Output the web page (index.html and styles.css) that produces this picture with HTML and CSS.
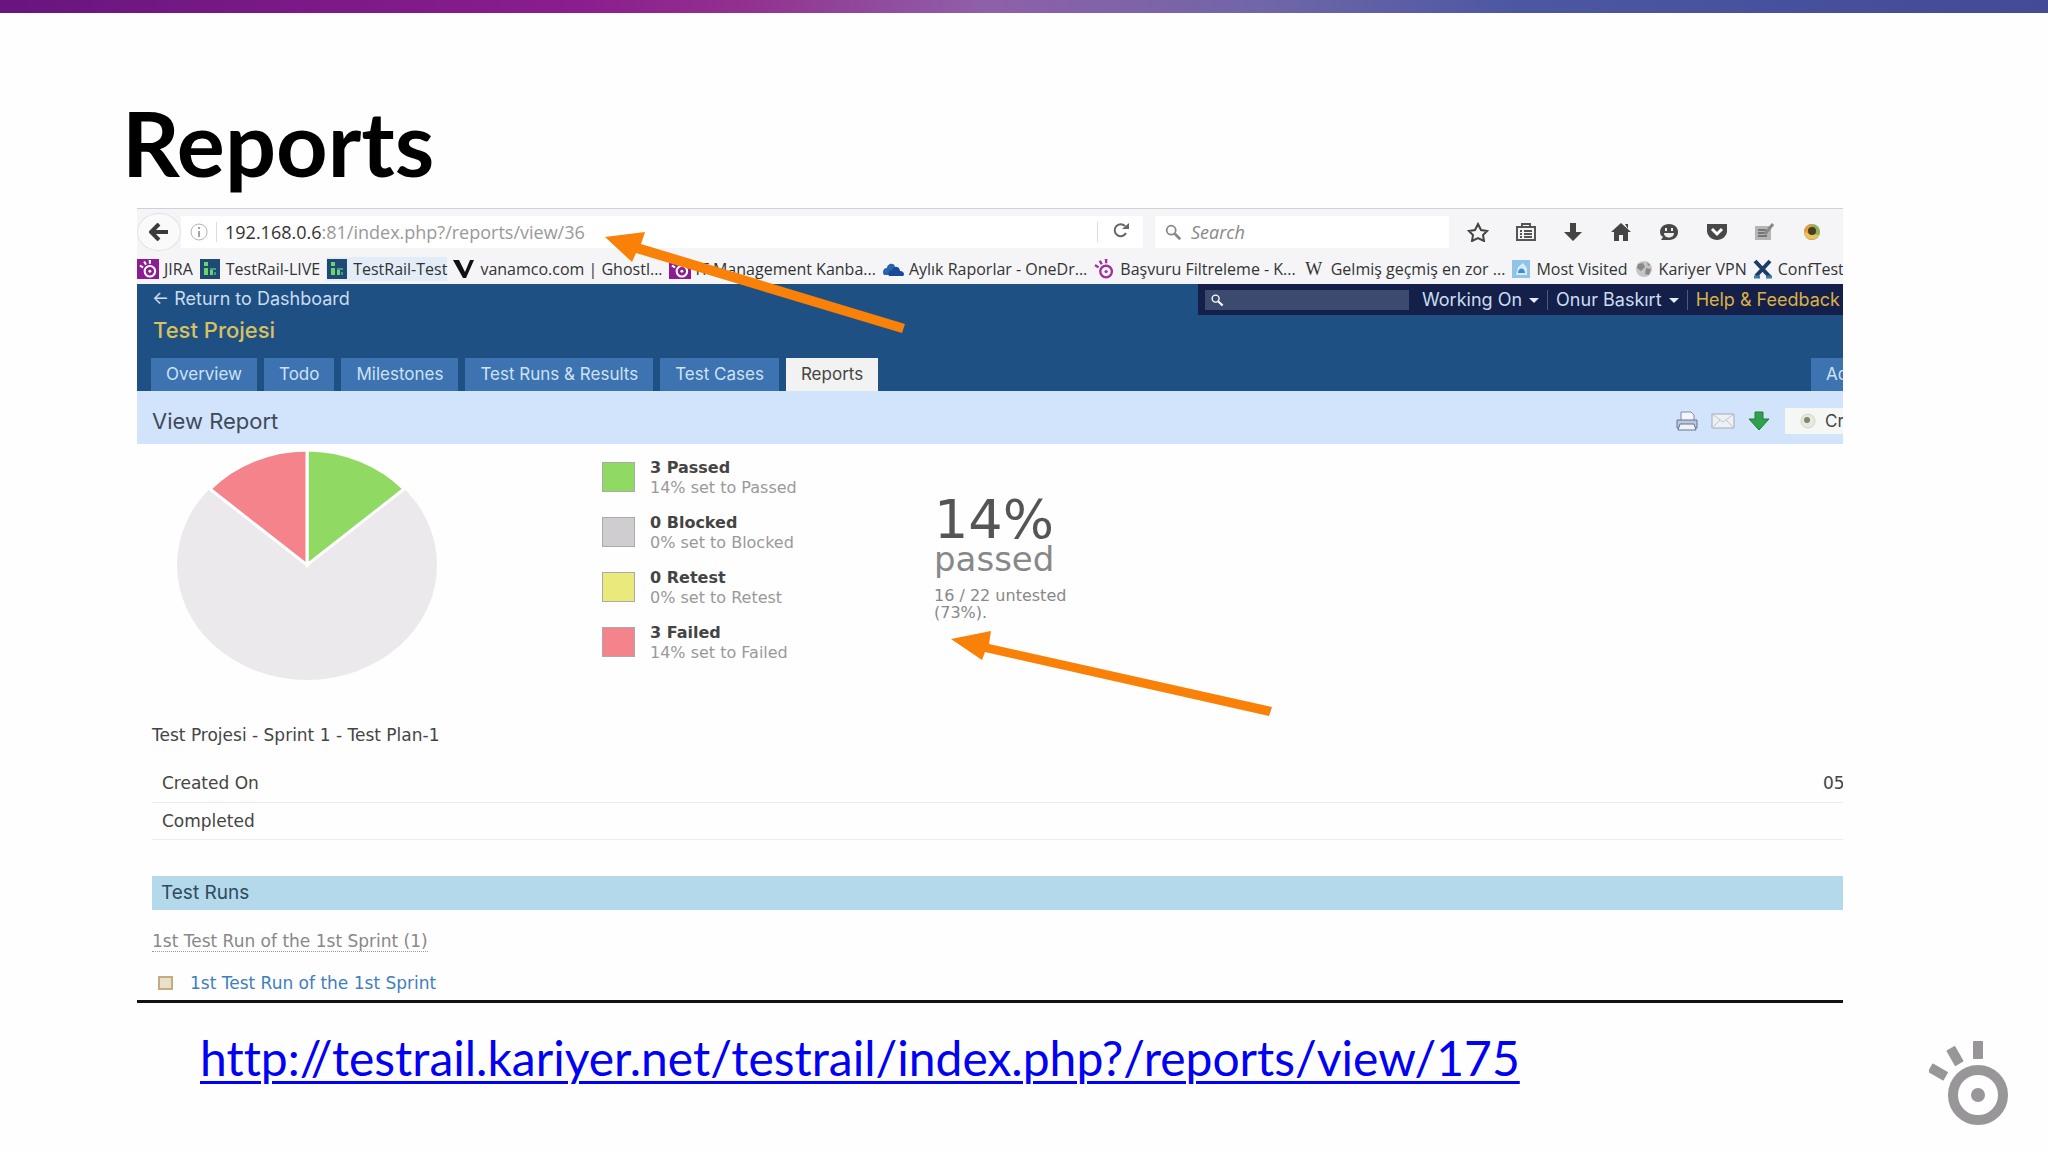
FILE: index.html
```html
<!DOCTYPE html>
<html lang="en">
<head>
  <meta charset="UTF-8">
  <title>Reports</title>
  <link rel="stylesheet" href="styles.css">
</head>
<body>

<svg class="defs" width="0" height="0" aria-hidden="true">
  <symbol id="eye" viewBox="0 0 80 86">
    <circle cx="49" cy="54" r="25" fill="none" stroke="currentColor" stroke-width="10"/>
    <circle cx="49" cy="54" r="7"/>
    <rect x="44" y="0" width="10" height="18" rx="1"/>
    <rect x="21" y="6" width="10" height="18" rx="1" transform="rotate(-30 26 15)"/>
    <rect x="4" y="22" width="10" height="18" rx="1" transform="rotate(-60 9 31)"/>
  </symbol>
  <symbol id="lens" viewBox="0 0 20 20">
    <circle cx="8" cy="8" r="5" fill="none" stroke="currentColor" stroke-width="2"/>
    <path d="M12 12l6 6" stroke="currentColor" stroke-width="3"/>
  </symbol>
  <symbol id="testrail" viewBox="0 0 20 20">
    <rect width="20" height="20" fill="#1f4a73"/>
    <path d="M4 3h4v4H4zM4 9h4v7H4zM10 11h3v5h-3z" fill="#6fd36b"/>
    <path d="M10 9h6v2h-6zM14 13h2v3h-2z" fill="#3f9f86"/>
  </symbol>
</svg>

<div class="stripe"></div>

<main class="slide">
  <h1>Reports</h1>

  <div class="shot">
    <div class="toolbar">
      <button class="back" aria-label="Back"><svg width="20" height="18" viewBox="0 0 20 18"><path d="M10 1L2 9l8 8M3 9h16" fill="none" stroke="#3a3a3a" stroke-width="4"/></svg></button>
      <div class="address">
        <svg width="20" height="18" viewBox="0 0 20 18"><circle cx="10" cy="9" r="8" fill="none" stroke="#b5b5b5" stroke-width="1"/><path d="M10 4v2M10 8v6" stroke="#a5a5a5" stroke-width="2"/></svg>
        <span class="url"><b>192.168.0.6</b>:81/index.php?/reports/view/36</span>
        <button class="reload" aria-label="Reload"><svg width="18" height="16" viewBox="0 0 18 16"><path d="M13 4a6 6 0 1 0 1 7" fill="none" stroke="#666" stroke-width="2"/><path d="M10 7h7V1z" fill="#666"/></svg></button>
      </div>
      <div class="search">
        <svg width="20" height="18" color="#888"><use href="#lens"/></svg>
        <input type="text" placeholder="Search" aria-label="Search">
      </div>
      <div class="tools">
        <svg viewBox="0 0 22 20"><path d="M11 2l3 6 6 1-4 4 1 6-6-3-6 3 1-6-4-4 6-1z" fill="none" stroke="#444" stroke-width="2"/></svg>
        <svg viewBox="0 0 22 20"><path d="M2 5h18v13H2zM7 5V2h8v3" fill="none" stroke="#555" stroke-width="2"/><path d="M5 9h2M9 9h8M5 12h2M9 12h8M5 15h2M9 15h8" stroke="#555" stroke-width="2"/></svg>
        <svg viewBox="0 0 22 20"><path d="M8 1h6v9h6l-9 9-9-9h6z" fill="#444"/></svg>
        <svg viewBox="0 0 22 20"><path d="M11 1l10 9h-3v9h-5v-6H9v6H4v-9H1z" fill="#444"/><path d="M15 2h3v5" fill="#444"/></svg>
        <svg viewBox="0 0 22 20"><path d="M11 2c6 0 9 4 9 8s-3 8-9 8H3l2-3c-2-1-3-3-3-5 0-4 3-8 9-8z" fill="#484848"/><path d="M6 11h10c0 6-10 6-10 0zM7 6h2v3H7zM13 6h2v3h-2z" fill="#eee"/></svg>
        <svg viewBox="0 0 22 20"><path d="M1 2h20v7c0 5-5 9-10 9S1 14 1 9z" fill="#484848"/><path d="M6 7l5 5 5-5" fill="none" stroke="#fff" stroke-width="3"/></svg>
        <svg viewBox="0 0 22 20"><path d="M2 4h16v14H2z" fill="#b5b5b5"/><path d="M5 8h8M5 11h7M5 14h9" stroke="#777" stroke-width="2"/><path d="M20 2l-8 10" stroke="#888" stroke-width="3"/></svg>
        <svg viewBox="0 0 22 20"><circle cx="11" cy="10" r="8" fill="#8fb05a"/><path d="M11 2a8 8 0 0 0 0 16l-3-8z" fill="#e79a4b"/><path d="M3 10a8 8 0 0 0 15 3l-8-1z" fill="#e9c35b"/><circle cx="11" cy="9" r="4" fill="#4a3d22"/></svg>
      </div>
    </div>

    <nav class="bookmarks">
      <a href="#"><span class="purple"><svg width="18" height="18"><use href="#eye"/></svg></span>JIRA</a>
      <a href="#"><svg width="22" height="20"><use href="#testrail"/></svg>TestRail-LIVE</a>
      <a href="#" class="hover"><svg width="22" height="20"><use href="#testrail"/></svg>TestRail-Test</a>
      <a href="#"><svg width="22" height="20" viewBox="0 0 22 20"><path d="M0 1h6l6 12 5-12h4l-8 18h-3z" fill="#111"/></svg>vanamco.com | Ghostl...</a>
      <a href="#"><span class="purple"><svg width="18" height="18"><use href="#eye"/></svg></span>IT Management Kanba...</a>
      <a href="#"><svg width="22" height="20" viewBox="0 0 22 20"><path d="M1 14c0-4 2-5 4-5 0-4 6-6 8-2l-5 9H2z" fill="#2b62ad"/><path d="M7 17c-2-4 1-6 3-6 1-5 8-4 8 1 4 0 5 4 3 5z" fill="#174a97"/></svg>Aylık Raporlar - OneDr...</a>
      <a href="#"><svg width="22" height="20" color="#a0309a" fill="#a0309a"><use href="#eye"/></svg>Başvuru Filtreleme - K...</a>
      <a href="#"><span class="wiki">W</span>Gelmiş geçmiş en zor ...</a>
      <a href="#"><svg width="20" height="20" viewBox="0 0 20 20"><rect x="1" y="1" width="18" height="18" fill="#8fc4e6"/><path d="M5 16l2-8 5-4 4 5v7z" fill="#d5ebf8"/><path d="M7 14c0-6 7-6 7 0z" fill="#3f90c8"/></svg>Most Visited</a>
      <a href="#"><svg width="20" height="20" viewBox="0 0 20 20"><circle cx="10" cy="10" r="8" fill="#c4c4c4"/><path d="M4 5l5-1 2 4-4 4-4-3zM12 9l5 1-2 6-4-1zM13 3l3 3-2 1z" fill="#888"/></svg>Kariyer VPN</a>
      <a href="#"><svg width="20" height="20" viewBox="0 0 20 20"><path d="M2 2l15 16M17 2L3 17" stroke="#1c3e66" stroke-width="4"/><path d="M1 18h6M13 18h6" stroke="#3c79ad" stroke-width="3"/></svg>ConfTest</a>
    </nav>

    <header class="banner">
      <div class="top">
        <a href="#" class="return">← Return to Dashboard</a>
        <div class="user">
          <label class="find"><svg width="14" height="14" color="#fff"><use href="#lens" width="14" height="14"/></svg><input type="text" aria-label="Find"></label>
          <a href="#">Working On <i class="caret"></i></a>
          <a href="#">Onur Baskırt <i class="caret"></i></a>
          <a href="#" class="help">Help &amp; Feedback</a>
        </div>
      </div>
      <h2>Test Projesi</h2>
      <nav class="tabs">
        <a href="#">Overview</a>
        <a href="#">Todo</a>
        <a href="#">Milestones</a>
        <a href="#">Test Runs &amp; Results</a>
        <a href="#">Test Cases</a>
        <a href="#" class="active">Reports</a>
        <a href="#" class="admin">Ad</a>
      </nav>
    </header>

    <div class="heading">
      <h3>View Report</h3>
      <div class="actions">
        <svg width="24" height="22" viewBox="0 0 24 22"><path d="M6 10V2h10l3 3v5" fill="#f3f7fc" stroke="#7c8ca6" stroke-width="1"/><path d="M2 10h20v8H2z" fill="#bcc7dc" stroke="#66748f" stroke-width="1"/><path d="M5 14h14l2 6H3z" fill="#eef3fa" stroke="#66748f" stroke-width="1"/></svg>
        <svg width="24" height="22" viewBox="0 0 24 22"><path d="M1 4h22v14H1z" fill="#eef0f4" stroke="#a3aab8" stroke-width="1"/><path d="M1 4l11 8 11-8M1 18l8-8M23 18l-8-8" fill="none" stroke="#c0c4cf" stroke-width="1"/></svg>
        <svg width="24" height="22" viewBox="0 0 24 22"><path d="M8 2h8v7h6L12 20 2 9h6z" fill="#2fa04c" stroke="#1e7c39" stroke-width="1"/></svg>
        <button class="create"><svg width="18" height="18" viewBox="0 0 18 18"><circle cx="9" cy="9" r="7" fill="#e7e9df" stroke="#d2d6c8"/><circle cx="8" cy="8" r="3" fill="#7d8770"/></svg>Cr</button>
      </div>
    </div>

    <section class="summary">
      <svg class="pie" width="260" height="230" viewBox="-130 -115 260 230">
        <ellipse rx="130" ry="115" fill="#ebe9eb"/>
        <g stroke="#fff" stroke-width="3">
          <path d="M0 0V-115A130 115 0 0 1 97 -76Z" fill="#90d963"/>
          <path d="M0 0V-115A130 115 0 0 0 -97 -76Z" fill="#f4838c"/>
        </g>
      </svg>
      <ul class="legend">
        <li class="passed"><b>3 Passed</b><span>14% set to Passed</span></li>
        <li class="blocked"><b>0 Blocked</b><span>0% set to Blocked</span></li>
        <li class="retest"><b>0 Retest</b><span>0% set to Retest</span></li>
        <li class="failed"><b>3 Failed</b><span>14% set to Failed</span></li>
      </ul>
      <div class="percent">
        <strong>14%</strong>
        <em>passed</em>
        <p>16 / 22 untested<br>(73%).</p>
      </div>
    </section>

    <section class="details">
      <h4>Test Projesi - Sprint 1 - Test Plan-1</h4>
      <table>
        <tr><th>Created On</th><td>05</td></tr>
        <tr><th>Completed</th><td></td></tr>
      </table>
      <h5>Test Runs</h5>
      <p class="group"><span>1st Test Run of the 1st Sprint (1)</span></p>
      <p class="run"><i></i><a href="#">1st Test Run of the 1st Sprint</a></p>
    </section>

    <svg class="arrows" width="1200" height="600" fill="#f98107">
      <path d="M468 28l40-5-4 12 264 80-3 9-266-80-4 9z"/>
      <path d="M814 430l40-8-2 13 283 63-3 9-284-64-3 8z"/>
    </svg>
  </div>

  <footer>
    <a href="http://testrail.kariyer.net/testrail/index.php?/reports/view/175">http://testrail.kariyer.net/testrail/index.php?/reports/view/175</a>
    <svg class="logo" width="80" height="86" color="#999699" fill="#999699"><use href="#eye"/></svg>
  </footer>
</main>

</body>
</html>
```

FILE: styles.css
```css
* {
  box-sizing: border-box;
}
body {
  margin: 0;
  background: #fefefe;
  font-family: "DejaVu Sans", sans-serif;
  color: #444;
}
h1, h2, h3, h4, h5, p, ul {
  margin: 0;
  padding: 0;
}
a {
  color: inherit;
  text-decoration: none;
}
button, input {
  font: inherit;
  color: inherit;
  border: 0;
  padding: 0;
  background: none;
}
svg {
  flex: none;
}
.defs {
  position: absolute;
}
.stripe {
  height: 13px;
  background: linear-gradient(90deg, #68157f, #8b1d8e 28%, #92308f 36%, #8f60a8 48%, #6f66a8 62%, #4c57a2 74%, #434a96);
}
.slide {
  padding: 84px 205px 0 137px;
}
h1 {
  margin-left: -15px;
  font: bold 90px/90px Lato, sans-serif;
  color: #000;
}

/* browser window */
.shot {
  position: relative;
  margin-top: 21px;
  overflow: hidden;
  border-top: 1px solid #d0d1d6;
  border-bottom: 3px solid #111;
}
.toolbar {
  display: flex;
  align-items: center;
  height: 46px;
  background: #f5f5f7;
}
.back {
  display: flex;
  align-items: center;
  justify-content: center;
  width: 44px;
  height: 38px;
  border: 1px solid #e2e2e4;
  border-radius: 50%;
  background: #fafafa;
}
.address {
  flex: 1;
  display: flex;
  align-items: center;
  height: 32px;
  padding-left: 8px;
  background: #fff;
}
.url {
  flex: 1;
  margin-left: 7px;
  padding-left: 8px;
  border-left: 1px solid #ddd;
  font: 18px/20px "Open Sans", sans-serif;
  color: #999;
}
.url b {
  font-weight: 400;
  color: #333;
}
.reload {
  width: 46px;
  border-left: 1px solid #ddd;
}
.search {
  display: flex;
  align-items: center;
  width: 294px;
  height: 32px;
  margin: 0 18px 0 12px;
  padding-left: 8px;
  background: #fff;
}
.search input {
  width: 240px;
  margin-left: 8px;
  font: italic 18px/20px "Open Sans", sans-serif;
}
.search input::placeholder {
  color: #888;
}
.tools {
  display: flex;
  justify-content: space-between;
  width: 356px;
  margin-right: 20px;
}
.tools svg {
  width: 22px;
  height: 20px;
}
.bookmarks {
  display: flex;
  align-items: center;
  gap: 6px;
  height: 29px;
  padding-bottom: 2px;
  background: #f5f5f7;
  font: 16px/24px "Open Sans", sans-serif;
  color: #333;
  white-space: nowrap;
}
.bookmarks a {
  display: flex;
  align-items: center;
  gap: 5px;
}
.bookmarks .hover {
  background: #e2edf8;
}
.purple {
  display: flex;
  padding: 1px 2px;
  background: #8d1b92;
  color: #fff;
}
.purple svg {
  fill: #fff;
}
.wiki {
  width: 24px;
  font: 18px/20px "Liberation Serif", serif;
  text-align: center;
}

/* project header */
.banner {
  height: 107px;
  background: #1f5083;
  font-family: Inter, sans-serif;
}
.top {
  display: flex;
  justify-content: space-between;
  height: 31px;
  padding-left: 15px;
  font-size: 18px;
  line-height: 30px;
  color: #c9dcf0;
}
.user {
  display: flex;
  align-items: center;
  width: 645px;
  background: #14204a;
  white-space: nowrap;
}
.find {
  display: flex;
  align-items: center;
  width: 204px;
  height: 20px;
  margin: 0 5px 0 7px;
  padding-left: 5px;
  background: #3d4a70;
}
.find input {
  width: 170px;
}
.user a {
  padding: 0 8px;
  line-height: 20px;
}
.user a + a {
  border-left: 1px solid #4c5b86;
}
.user .help {
  padding-right: 0;
  color: #d9b145;
}
.caret {
  display: inline-block;
  margin: 0 0 3px 2px;
  border: 5px solid transparent;
  border-top-color: #e6ecf5;
  border-bottom: 0;
}
.banner h2 {
  padding-left: 16px;
  font-size: 22px;
  font-weight: 500;
  line-height: 30px;
  color: #d8c15f;
}
.tabs {
  display: flex;
  gap: 7px;
  margin-top: 13px;
  padding-left: 14px;
  font-size: 17px;
  line-height: 33px;
  white-space: nowrap;
}
.tabs a {
  padding: 0 15px;
  background: #3c73b0;
  color: #cfe2f6;
}
.tabs .active {
  background: #f2f2f2;
  color: #444;
}
.tabs .admin {
  width: 32px;
  margin-left: auto;
  overflow: hidden;
}
.heading {
  display: flex;
  align-items: center;
  justify-content: space-between;
  height: 53px;
  padding-left: 15px;
  background: #d2e4fb;
}
.heading h3 {
  padding-top: 6px;
  font: 22px/26px Inter, sans-serif;
  color: #3f4a58;
}
.actions {
  display: flex;
  align-items: center;
  gap: 12px;
  width: 168px;
  padding-top: 6px;
}
.create {
  display: flex;
  align-items: center;
  gap: 8px;
  height: 26px;
  margin-left: 2px;
  padding-left: 14px;
  background: #f4f7f4;
  font: 17px/26px Inter, sans-serif;
  white-space: nowrap;
}

/* report */
.summary {
  display: flex;
  padding: 6px 0 0 40px;
}
.legend {
  width: 332px;
  margin: 8px 0 0 165px;
  list-style: none;
}
.legend li {
  position: relative;
  height: 55px;
  padding-left: 48px;
  font-size: 16px;
  line-height: 20px;
}
.legend li::before {
  content: "";
  position: absolute;
  left: 0;
  top: 4px;
  width: 31px;
  height: 28px;
  border: 1px solid #aaa;
  background: #90d963;
}
.legend .blocked::before {
  background: #cfcdd0;
}
.legend .retest::before {
  background: #eaea7c;
}
.legend .failed::before {
  background: #f4838c;
}
.legend b, .legend span {
  display: block;
}
.legend span {
  color: #999;
}
.percent {
  margin-top: 45px;
  color: #888;
}
.percent strong, .percent em {
  display: block;
  font-style: normal;
  font-weight: 400;
}
.percent strong {
  font-size: 54px;
  line-height: 50px;
  color: #555;
}
.percent em {
  font-size: 34px;
  line-height: 28px;
}
.percent p {
  margin-top: 14px;
  font-size: 16px;
  line-height: 17px;
}
.details {
  padding: 43px 0 0 15px;
}
.details h4 {
  font-size: 17px;
  font-weight: 400;
  line-height: 24px;
}
.details table {
  width: 100%;
  margin-top: 18px;
  border-collapse: collapse;
  font-size: 17px;
  line-height: 22px;
}
.details th, .details td {
  height: 37px;
  padding: 0 0 0 10px;
  border-bottom: 1px solid #eee8ef;
  font-weight: 400;
  text-align: left;
}
.details td {
  width: 30px;
  max-width: 30px;
  overflow: hidden;
  white-space: nowrap;
}
.details h5 {
  margin-top: 36px;
  padding-left: 9px;
  background: #b3d9eb;
  font: 19px/34px Inter, sans-serif;
  color: #2f4a5c;
}
.group {
  margin-top: 21px;
  font-size: 17px;
  line-height: 20px;
  color: #888;
}
.group span {
  border-bottom: 1px dotted #999;
}
.run {
  display: flex;
  align-items: center;
  gap: 17px;
  margin-top: 22px;
  padding: 0 0 7px 6px;
  font-size: 17px;
  line-height: 20px;
  color: #3f7fbd;
}
.run i {
  width: 15px;
  height: 14px;
  border: 2px solid #c3ac83;
  background: #eadfc8;
}
.arrows {
  position: absolute;
  top: 0;
  left: 0;
}

footer {
  display: flex;
  align-items: flex-start;
  justify-content: space-between;
  margin-right: -166px;
  padding: 26px 0 0 63px;
}
footer a {
  font: 48px/58px Lato, sans-serif;
  font-variant-ligatures: none;
  color: #0000f4;
  text-decoration: underline;
  text-decoration-thickness: 3px;
  text-underline-offset: 5px;
}
.logo {
  margin-top: 12px;
}
```
